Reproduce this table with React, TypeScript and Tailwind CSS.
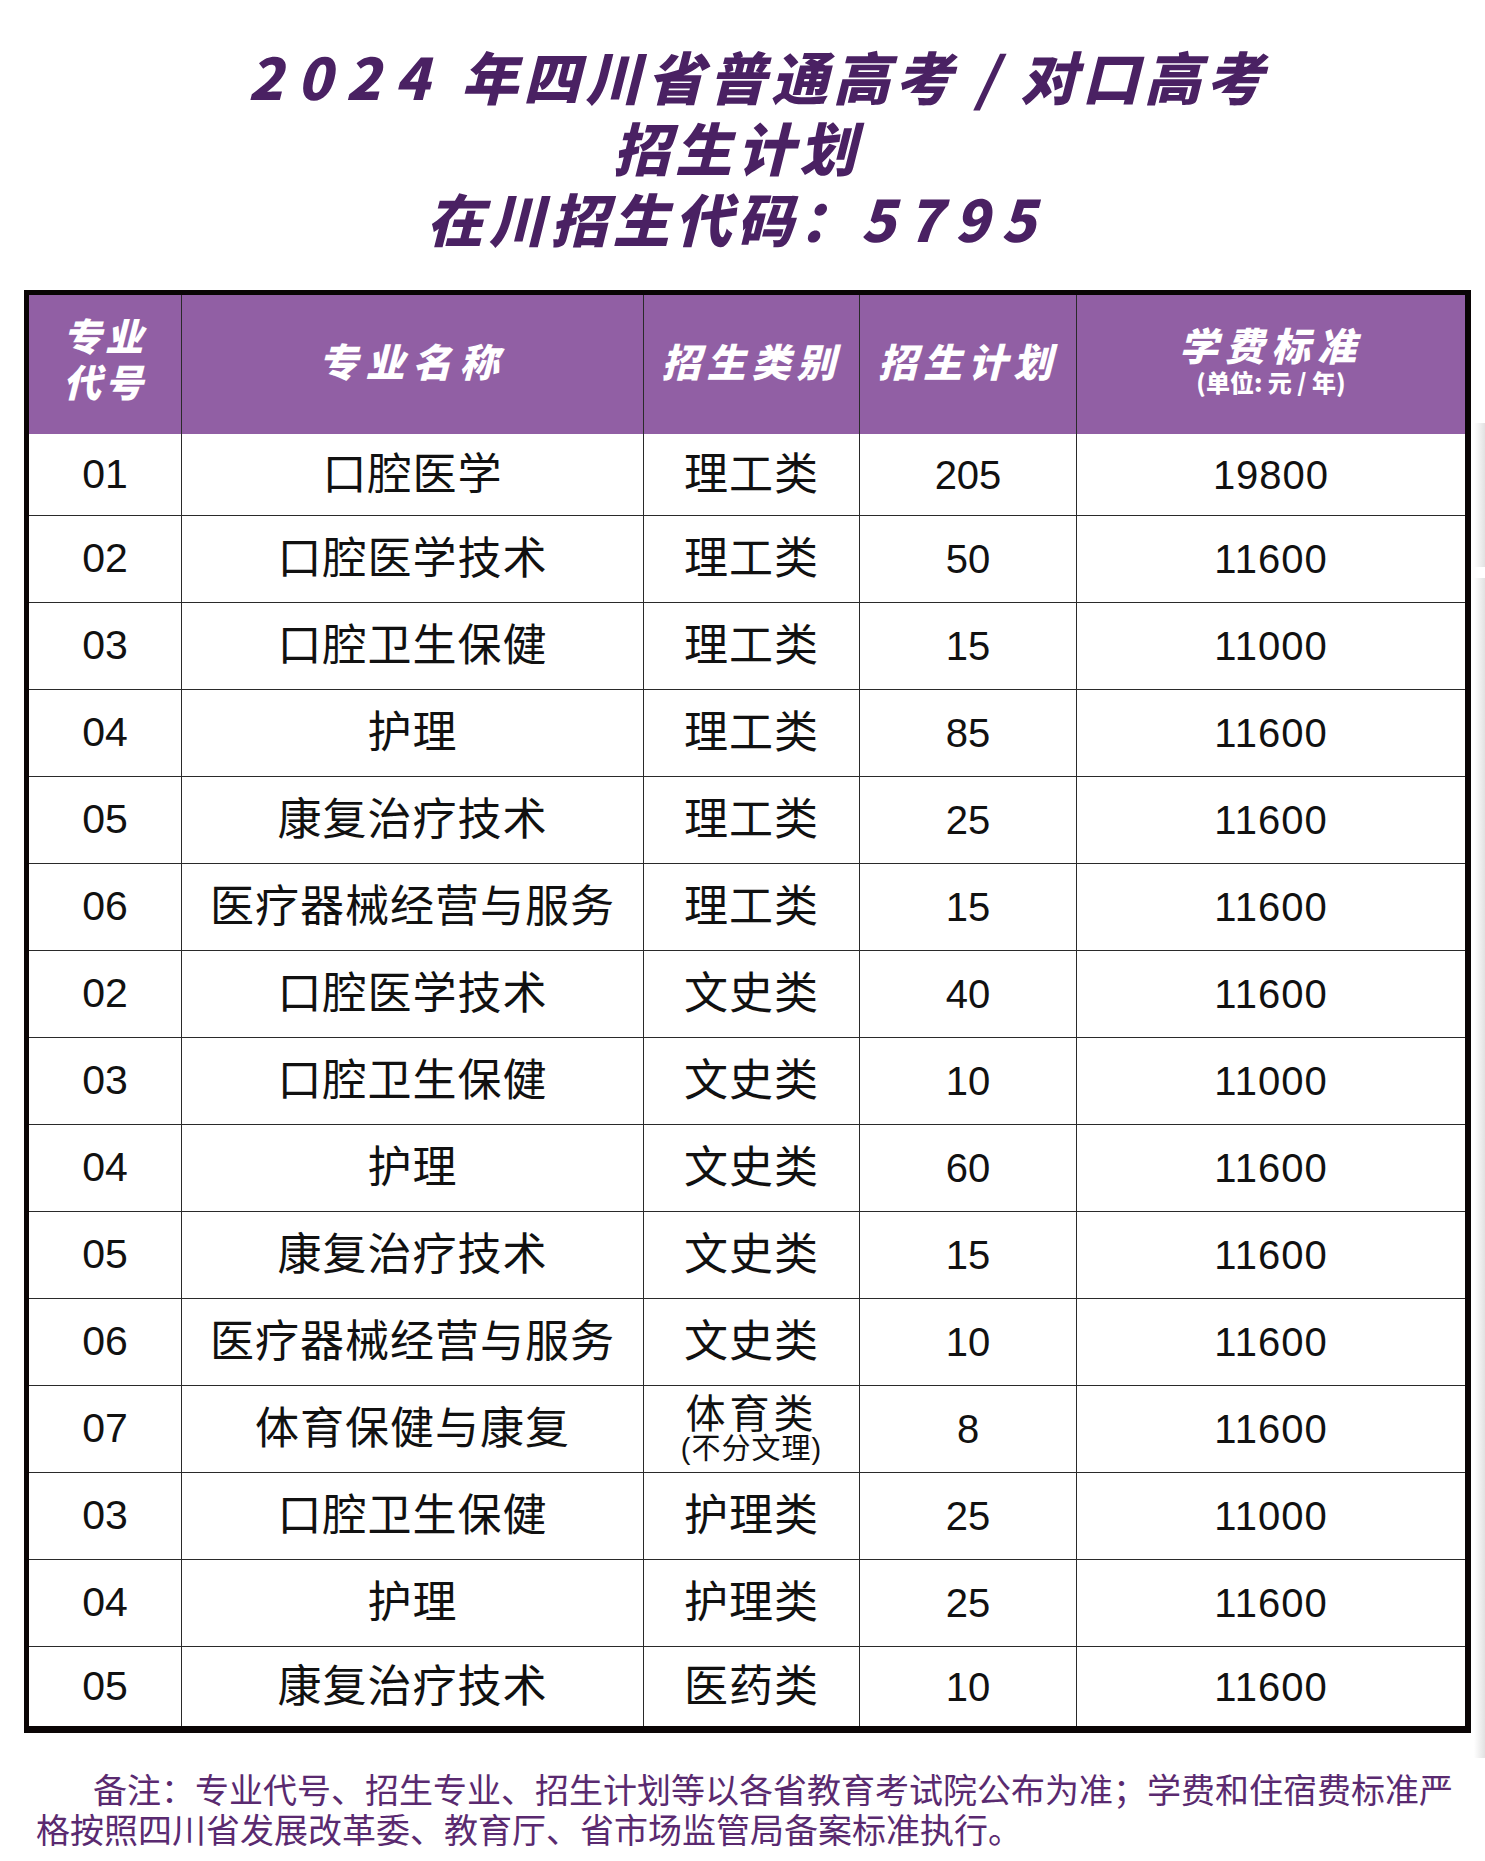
import React from "react";

type Row = {
  code: string;
  name: string;
  category: string;
  note?: string;
  plan: string;
  fee: string;
};

const rows: Row[] = [
  { code: "01", name: "口腔医学", category: "理工类", plan: "205", fee: "19800" },
  { code: "02", name: "口腔医学技术", category: "理工类", plan: "50", fee: "11600" },
  { code: "03", name: "口腔卫生保健", category: "理工类", plan: "15", fee: "11000" },
  { code: "04", name: "护理", category: "理工类", plan: "85", fee: "11600" },
  { code: "05", name: "康复治疗技术", category: "理工类", plan: "25", fee: "11600" },
  { code: "06", name: "医疗器械经营与服务", category: "理工类", plan: "15", fee: "11600" },
  { code: "02", name: "口腔医学技术", category: "文史类", plan: "40", fee: "11600" },
  { code: "03", name: "口腔卫生保健", category: "文史类", plan: "10", fee: "11000" },
  { code: "04", name: "护理", category: "文史类", plan: "60", fee: "11600" },
  { code: "05", name: "康复治疗技术", category: "文史类", plan: "15", fee: "11600" },
  { code: "06", name: "医疗器械经营与服务", category: "文史类", plan: "10", fee: "11600" },
  { code: "07", name: "体育保健与康复", category: "体育类", note: "(不分文理)", plan: "8", fee: "11600" },
  { code: "03", name: "口腔卫生保健", category: "护理类", plan: "25", fee: "11000" },
  { code: "04", name: "护理", category: "护理类", plan: "25", fee: "11600" },
  { code: "05", name: "康复治疗技术", category: "医药类", plan: "10", fee: "11600" },
];

const display = "font-['Noto_Sans_CJK_SC',sans-serif] font-black italic";
const body = "font-['Liberation_Sans','Noto_Sans_CJK_SC',sans-serif] text-[#111]";
const cols = "grid grid-cols-[153px_462px_216px_217px_388px]";

const HeadCell: React.FC<{ children: React.ReactNode; last?: boolean }> = ({ children, last }) => (
  <div
    className={`flex flex-col items-center justify-center text-white ${display} ${
      last ? "" : "border-r border-[#2a2a2a]"
    }`}
  >
    {children}
  </div>
);

const Cell: React.FC<{ children: React.ReactNode; last?: boolean; bottom: boolean; cls?: string }> = ({
  children,
  last,
  bottom,
  cls,
}) => (
  <div
    className={`flex flex-col items-center justify-center ${body} ${cls ?? ""} ${
      last ? "" : "border-r border-[#2a2a2a]"
    } ${bottom ? "border-b border-[#2a2a2a]" : ""}`}
  >
    {children}
  </div>
);

export default function App() {
  return (
    <div className="flex w-[1485px] min-h-[1861px] bg-white">
      <div className="w-[1474px]">
        <div className={`pt-[40px] text-center text-[#4a2163] ${display} text-[57px] leading-[71px] tracking-[5px]`}>
          <div className="pl-[42px]">
            <span className="tracking-[14px]">2024</span> 年四川省普通高考 / 对口高考
          </div>
          <div>招生计划</div>
          <div>
            在川招生代码：<span className="tracking-[12px]">5795</span>
          </div>
        </div>

        <div className="ml-[24px] mt-[37px] w-[1447px] border-t-[5px] border-l-[5px] border-r-[6px] border-b-[7px] border-[#0a0505]">
          <div className={`${cols} h-[139px] bg-[#915fa4]`}>
            <HeadCell>
              <div className="text-[38px] leading-[46px] tracking-[4px] -mt-[14px]">专业</div>
              <div className="text-[38px] leading-[46px] tracking-[4px]">代号</div>
            </HeadCell>
            <HeadCell>
              <div className="text-[39px] tracking-[8px] -mt-[8px]">专业名称</div>
            </HeadCell>
            <HeadCell>
              <div className="text-[39px] tracking-[6px] -mt-[8px]">招生类别</div>
            </HeadCell>
            <HeadCell>
              <div className="text-[39px] tracking-[6px] -mt-[8px]">招生计划</div>
            </HeadCell>
            <HeadCell last>
              <div className="text-[39px] leading-[44px] tracking-[7px] -mt-[10px]">学费标准</div>
              <div className="text-[24px] leading-[32px] not-italic">(单位: 元 / 年)</div>
            </HeadCell>
          </div>

          {rows.map((r, i) => {
            const bottom = i < rows.length - 1;
            const h = i === 0 ? "h-[82px]" : i === rows.length - 1 ? "h-[79px]" : "h-[87px]";
            return (
              <div key={i} className={`${cols} ${h}`}>
                <Cell bottom={bottom} cls="text-[41px]">
                  {r.code}
                </Cell>
                <Cell bottom={bottom} cls="text-[44px] tracking-[1px]">
                  {r.name}
                </Cell>
                <Cell bottom={bottom} cls="text-[44px] tracking-[1px]">
                  {r.note ? (
                    <>
                      <div className="text-[40px] leading-[40px] tracking-[4px]">{r.category}</div>
                      <div className="text-[29px] leading-[30px]">{r.note}</div>
                    </>
                  ) : (
                    r.category
                  )}
                </Cell>
                <Cell bottom={bottom} cls="text-[40px]">
                  {r.plan}
                </Cell>
                <Cell bottom={bottom} last cls="text-[40px] tracking-[1px]">
                  {r.fee}
                </Cell>
              </div>
            );
          })}
        </div>

        <div className="mt-[36px] pl-[36px] font-['Noto_Sans_CJK_SC',sans-serif] text-[34px] leading-[40px] text-[#5a2a70] whitespace-nowrap">
          <div className="pl-[57px]">
            备注：专业代号、招生专业、招生计划等以各省教育考试院公布为准；学费和住宿费标准严
          </div>
          <div>格按照四川省发展改革委、教育厅、省市场监管局备案标准执行。</div>
        </div>
      </div>

      <div className="w-[11px] pt-[423px]">
        <div className="h-[144px] bg-gradient-to-r from-white to-[#e2e2e2]" />
        <div className="mt-[11px] h-[1180px] bg-gradient-to-r from-white to-[#e2e2e2]" />
      </div>
    </div>
  );
}
